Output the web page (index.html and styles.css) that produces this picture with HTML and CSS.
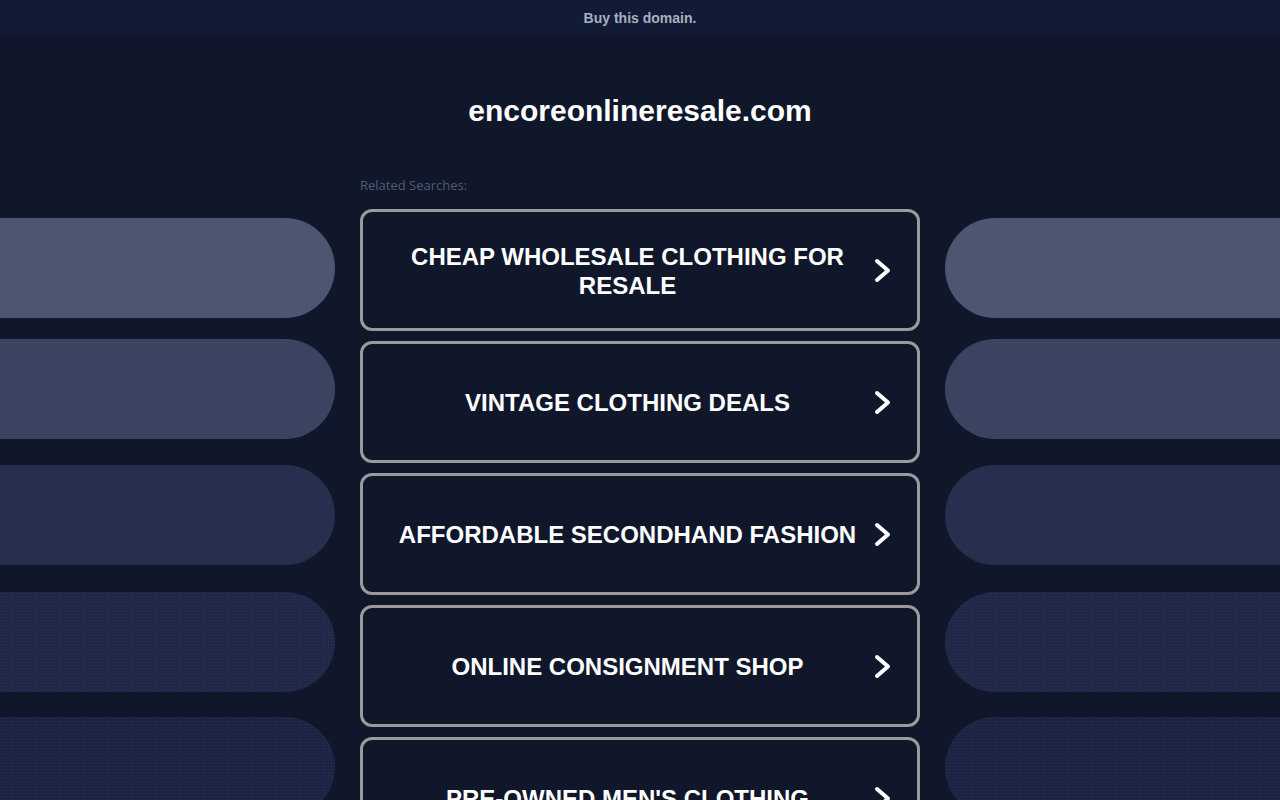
FILE: index.html
```html
<!DOCTYPE html>
<html lang="en">
<head>
    <meta charset="UTF-8">
    <meta name="viewport" content="width=device-width, initial-scale=1.0">
    <title>encoreonlineresale.com</title>
    <link rel="stylesheet" href="styles.css">
</head>
<body>
    <div class="top-bar">
        <a href="#">Buy this domain.</a>
    </div>

    <div class="layout">
        <div class="side side-left">
            <div class="pill pill-1"></div>
            <div class="pill pill-2"></div>
            <div class="pill pill-3"></div>
            <div class="pill pill-4"></div>
            <div class="pill pill-5"></div>
        </div>

        <div class="main">
            <h1>encoreonlineresale.com</h1>
            <div class="related">Related Searches:</div>

            <div class="links">
                <a class="link" href="#">
                    <span class="link-text">CHEAP WHOLESALE CLOTHING FOR RESALE</span>
                    <svg class="chevron" viewBox="0 0 17 25"><polyline points="3,3 14,12.5 3,22"/></svg>
                </a>
                <a class="link" href="#">
                    <span class="link-text">VINTAGE CLOTHING DEALS</span>
                    <svg class="chevron" viewBox="0 0 17 25"><polyline points="3,3 14,12.5 3,22"/></svg>
                </a>
                <a class="link" href="#">
                    <span class="link-text">AFFORDABLE SECONDHAND FASHION</span>
                    <svg class="chevron" viewBox="0 0 17 25"><polyline points="3,3 14,12.5 3,22"/></svg>
                </a>
                <a class="link" href="#">
                    <span class="link-text">ONLINE CONSIGNMENT SHOP</span>
                    <svg class="chevron" viewBox="0 0 17 25"><polyline points="3,3 14,12.5 3,22"/></svg>
                </a>
                <a class="link" href="#">
                    <span class="link-text">PRE-OWNED MEN'S CLOTHING</span>
                    <svg class="chevron" viewBox="0 0 17 25"><polyline points="3,3 14,12.5 3,22"/></svg>
                </a>
            </div>
        </div>

        <div class="side side-right">
            <div class="pill pill-1"></div>
            <div class="pill pill-2"></div>
            <div class="pill pill-3"></div>
            <div class="pill pill-4"></div>
            <div class="pill pill-5"></div>
        </div>
    </div>
</body>
</html>
```

FILE: styles.css
```css
html, body {
    overflow: hidden;
}
body {
    margin: 0;
    padding: 0;
    background-color: #11172b;
    font-family: "Liberation Sans", Arial, sans-serif;
    color: #fff;
}
.top-bar {
    height: 35px;
    background-color: #121b35;
    display: flex;
    align-items: center;
    justify-content: center;
}
.top-bar a {
    color: #a7b0c0;
    font-size: 14px;
    font-weight: bold;
    text-decoration: none;
}
.layout {
    display: grid;
    grid-template-columns: 335px 560px 335px;
    column-gap: 25px;
}
.side {
    display: flex;
    flex-direction: column;
    padding-top: 183px;
}
.pill {
    height: 100px;
    flex-shrink: 0;
}
.side-left .pill {
    border-radius: 0 50px 50px 0;
}
.side-right .pill {
    border-radius: 50px 0 0 50px;
}
.pill-1 {
    background-color: #4c5671;
}
.pill-2 {
    margin-top: 21px;
    background-color: #3a4360;
}
.pill-3 {
    margin-top: 26px;
    background-color: #262f4d;
}
.pill-4 {
    margin-top: 27px;
    background-color: #1f2847;
    background-image: radial-gradient(rgba(60, 75, 115, 0.35) 0.6px, transparent 0.8px);
    background-size: 3px 3px;
}
.pill-5 {
    margin-top: 25px;
    background-color: #1c2444;
    background-image: radial-gradient(rgba(60, 75, 115, 0.35) 0.6px, transparent 0.8px);
    background-size: 3px 3px;
}
.main {
    display: flex;
    flex-direction: column;
}
h1 {
    margin: 59px 0 0;
    font-size: 30px;
    line-height: 34px;
    text-align: center;
}
.related {
    margin-top: 49px;
    font-family: "Open Sans", sans-serif;
    font-size: 13px;
    line-height: 16px;
    color: #4f5b77;
}
.links {
    margin-top: 16px;
    display: flex;
    flex-direction: column;
    gap: 10px;
}
.link {
    box-sizing: border-box;
    height: 122px;
    width: 560px;
    border: 3px solid #9a9a9a;
    border-radius: 12px;
    display: flex;
    align-items: center;
    padding: 0 26px 0 18px;
    text-decoration: none;
    color: #fff;
}
.link-text {
    flex: 1;
    text-align: center;
    font-size: 24px;
    font-weight: bold;
    line-height: 29px;
    padding: 0 10px;
    margin-top: 1px;
}
.chevron {
    width: 17px;
    height: 25px;
    flex-shrink: 0;
    fill: none;
    stroke: #fff;
    stroke-width: 4;
    stroke-linecap: round;
    stroke-linejoin: round;
}
```
